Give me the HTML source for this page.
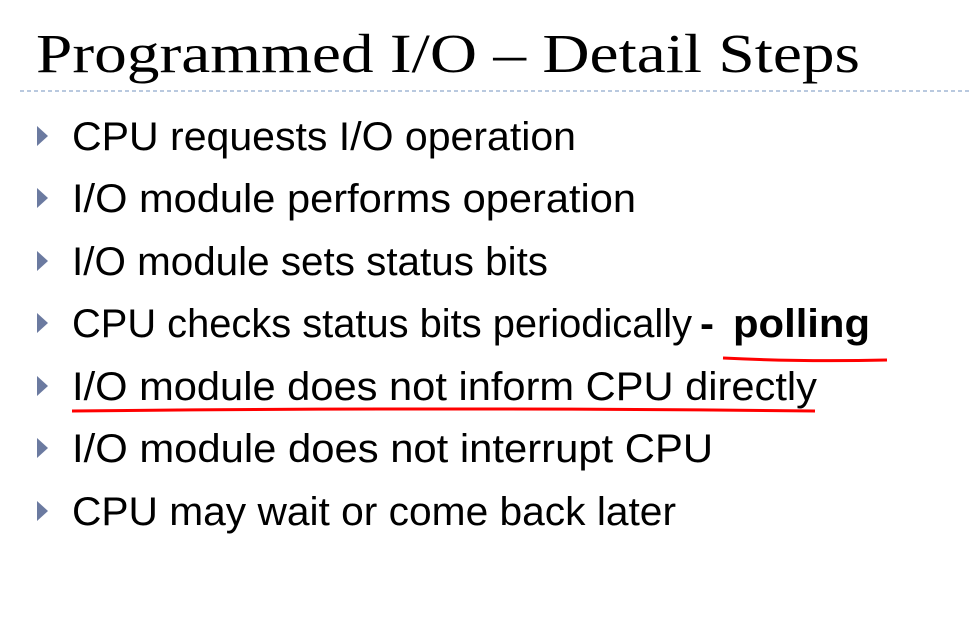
<!DOCTYPE html>
<html><head><style>body{margin:0;background:#fff}</style></head><body>
<svg width="969" height="618" xmlns="http://www.w3.org/2000/svg" style="display:block">
<rect width="969" height="618" fill="#fff"/>
<text x="36" y="72" font-family="Liberation Serif, serif" font-size="55" fill="#000" textLength="824" lengthAdjust="spacingAndGlyphs">Programmed I/O – Detail Steps</text>
<line x1="20" y1="91" x2="969" y2="91" stroke="#8fa9cc" stroke-width="1.2" stroke-dasharray="4,3"/>
<g fill="#6b7aa0">
<polygon points="37,126 48,136 37,146"/>
<polygon points="37,188 48,198 37,208"/>
<polygon points="37,251 48,261 37,271"/>
<polygon points="37,313 48,323 37,333"/>
<polygon points="37,376 48,386 37,396"/>
<polygon points="37,438 48,448 37,458"/>
<polygon points="37,501 48,511 37,521"/>
</g>
<g font-family="Liberation Sans, sans-serif" font-size="40" fill="#000">
<text x="72" y="150" textLength="504" lengthAdjust="spacingAndGlyphs">CPU requests I/O operation</text>
<text x="72" y="212" textLength="564" lengthAdjust="spacingAndGlyphs">I/O module performs operation</text>
<text x="72" y="275" textLength="476" lengthAdjust="spacingAndGlyphs">I/O module sets status bits</text>
<text x="72" y="337" textLength="620" lengthAdjust="spacingAndGlyphs">CPU checks status bits periodically</text>
<text x="700" y="337" font-weight="bold" textLength="14" lengthAdjust="spacingAndGlyphs">-</text>
<text x="733" y="337" font-weight="bold" textLength="137" lengthAdjust="spacingAndGlyphs">polling</text>
<text x="72" y="400" textLength="745" lengthAdjust="spacingAndGlyphs">I/O module does not inform CPU directly</text>
<text x="72" y="462" textLength="641" lengthAdjust="spacingAndGlyphs">I/O module does not interrupt CPU</text>
<text x="72" y="525" textLength="604" lengthAdjust="spacingAndGlyphs">CPU may wait or come back later</text>
</g>
<path d="M723,358 Q800,362 887,360" stroke="#f00" stroke-width="3" fill="none"/>
<path d="M72,411 Q450,407 815,411" stroke="#f00" stroke-width="3" fill="none"/>
</svg>
</body></html>
